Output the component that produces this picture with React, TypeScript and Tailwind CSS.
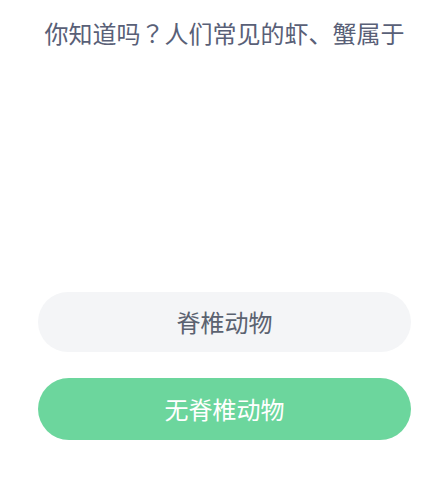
export default function App() {
  return (
    <div
      className="w-[426px] h-[483px] bg-white flex flex-col pl-[38px]"
      style={{ fontFamily: '"Noto Sans CJK SC", "Noto Sans", sans-serif' }}
    >
      <div className="w-[373px] pt-[17px] h-[49px] text-center text-[24px] leading-[32px] text-[#596077] whitespace-nowrap">
        你知道吗
        <span className="font-['Noto_Sans_CJK_JP',sans-serif]">？</span>
        人们常见的虾、蟹属于
      </div>
      <div className="mt-[243px] w-[373px] flex flex-col gap-[26px]">
        <div className="h-[60px] rounded-full bg-[#f4f5f7] flex items-center justify-center text-[24px] text-[#5b6270]">
          脊椎动物
        </div>
        <div className="h-[62px] rounded-full bg-[#6cd69d] flex items-center justify-center text-[24px] text-white">
          无脊椎动物
        </div>
      </div>
    </div>
  );
}
